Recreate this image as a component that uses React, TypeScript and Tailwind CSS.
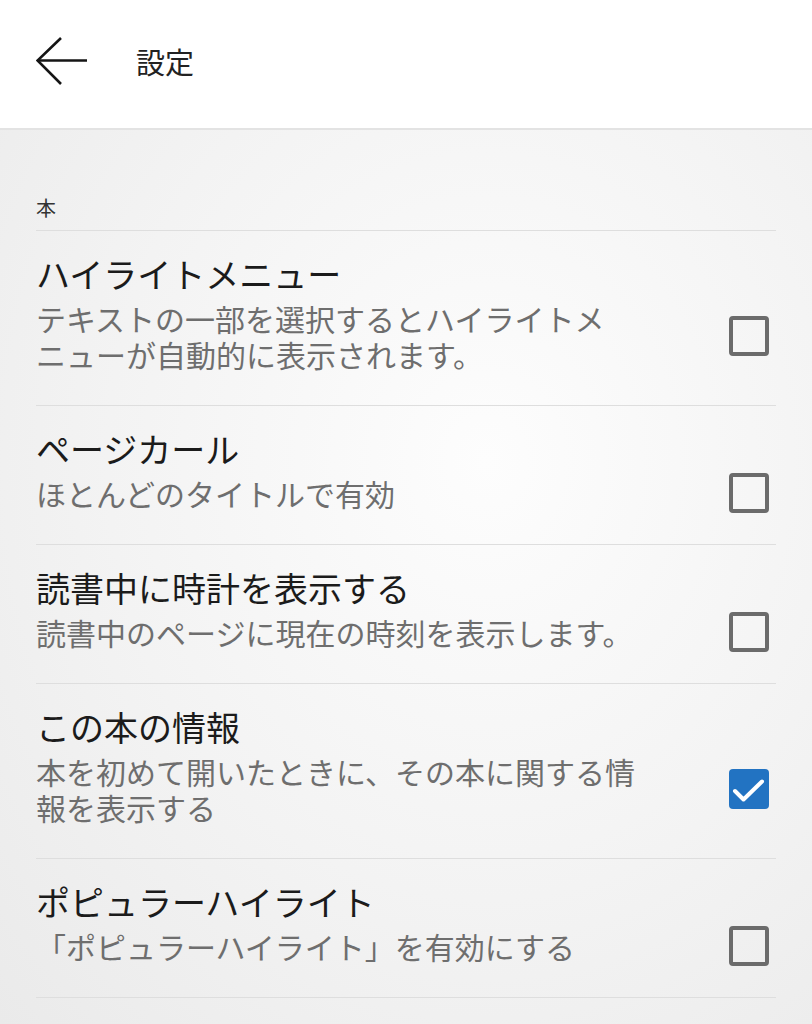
import React, { useState } from 'react';

interface Setting {
  id: string;
  title: string;
  lines: string[];
  checked: boolean;
}

const initialSettings: Setting[] = [
  {
    id: 'highlight-menu',
    title: 'ハイライトメニュー',
    lines: ['テキストの一部を選択するとハイライトメ', 'ニューが自動的に表示されます。'],
    checked: false,
  },
  {
    id: 'page-curl',
    title: 'ページカール',
    lines: ['ほとんどのタイトルで有効'],
    checked: false,
  },
  {
    id: 'clock',
    title: '読書中に時計を表示する',
    lines: ['読書中のページに現在の時刻を表示します。'],
    checked: false,
  },
  {
    id: 'about-book',
    title: 'この本の情報',
    lines: ['本を初めて開いたときに、その本に関する情', '報を表示する'],
    checked: true,
  },
  {
    id: 'popular-highlights',
    title: 'ポピュラーハイライト',
    lines: ['「ポピュラーハイライト」を有効にする'],
    checked: false,
  },
];

function Checkbox({ checked, onToggle }: { checked: boolean; onToggle: () => void }) {
  return (
    <button
      onClick={onToggle}
      className={`w-10 h-10 -my-[2px] shrink-0 mr-[7px] rounded-[4px] flex items-center justify-center ${
        checked ? 'bg-[#2273c2]' : 'border-[4px] border-[#6b6b6b]'
      }`}
    >
      {checked && (
        <svg width="40" height="40" viewBox="0 0 40 40" fill="none">
          <path d="M6 22 L14.5 30.5 L33 12.5" stroke="white" strokeWidth="4" strokeLinecap="round" strokeLinejoin="round" />
        </svg>
      )}
    </button>
  );
}

export default function App() {
  const [settings, setSettings] = useState(initialSettings);

  const toggle = (id: string) => {
    setSettings(settings.map(s => (s.id === id ? { ...s, checked: !s.checked } : s)));
  };

  return (
    <div className="min-h-[1024px] w-full flex flex-col font-['Noto_Sans_CJK_JP','Noto_Sans',sans-serif] bg-[radial-gradient(ellipse_at_60%_45%,#fdfdfd_0%,#f3f3f3_55%,#eaeaea_100%)]">
      {/* Header */}
      <div className="h-[130px] shrink-0 bg-white border-b-2 border-[#e3e3e3] flex items-center pl-9 pb-[6px]">
        <button className="w-[52px] h-[48px] flex items-center">
          <svg width="52" height="48" viewBox="0 0 52 48" fill="none">
            <path d="M1.5 23.5 L51 23.5" stroke="#151515" strokeWidth="2.6" />
            <path d="M25 1 L1.5 23.5 L25 47" stroke="#151515" strokeWidth="2.6" strokeLinejoin="miter" />
          </svg>
        </button>
        <h1 className="ml-12 text-[29px] leading-none text-[#222]">設定</h1>
      </div>

      <div className="px-9">
        <div className="pt-[64px] pb-[8px] border-b border-[#dedede]">
          <p className="text-[20px] leading-[28px] text-[#333]">本</p>
        </div>

        {settings.map(s => (
          <div key={s.id} className="pt-[19px] pb-[33px] border-b border-[#dedede]">
            <p className="text-[34px] leading-[48px] text-[#1b1b1b] whitespace-nowrap">{s.title}</p>
            <div className="mt-0.5 flex items-center">
              <div className="flex-1 text-[30px] leading-[36px] text-[#6e6e6e]">
                {s.lines.map(line => (
                  <div key={line} className="whitespace-nowrap">{line}</div>
                ))}
              </div>
              <Checkbox checked={s.checked} onToggle={() => toggle(s.id)} />
            </div>
          </div>
        ))}
      </div>
    </div>
  );
}
